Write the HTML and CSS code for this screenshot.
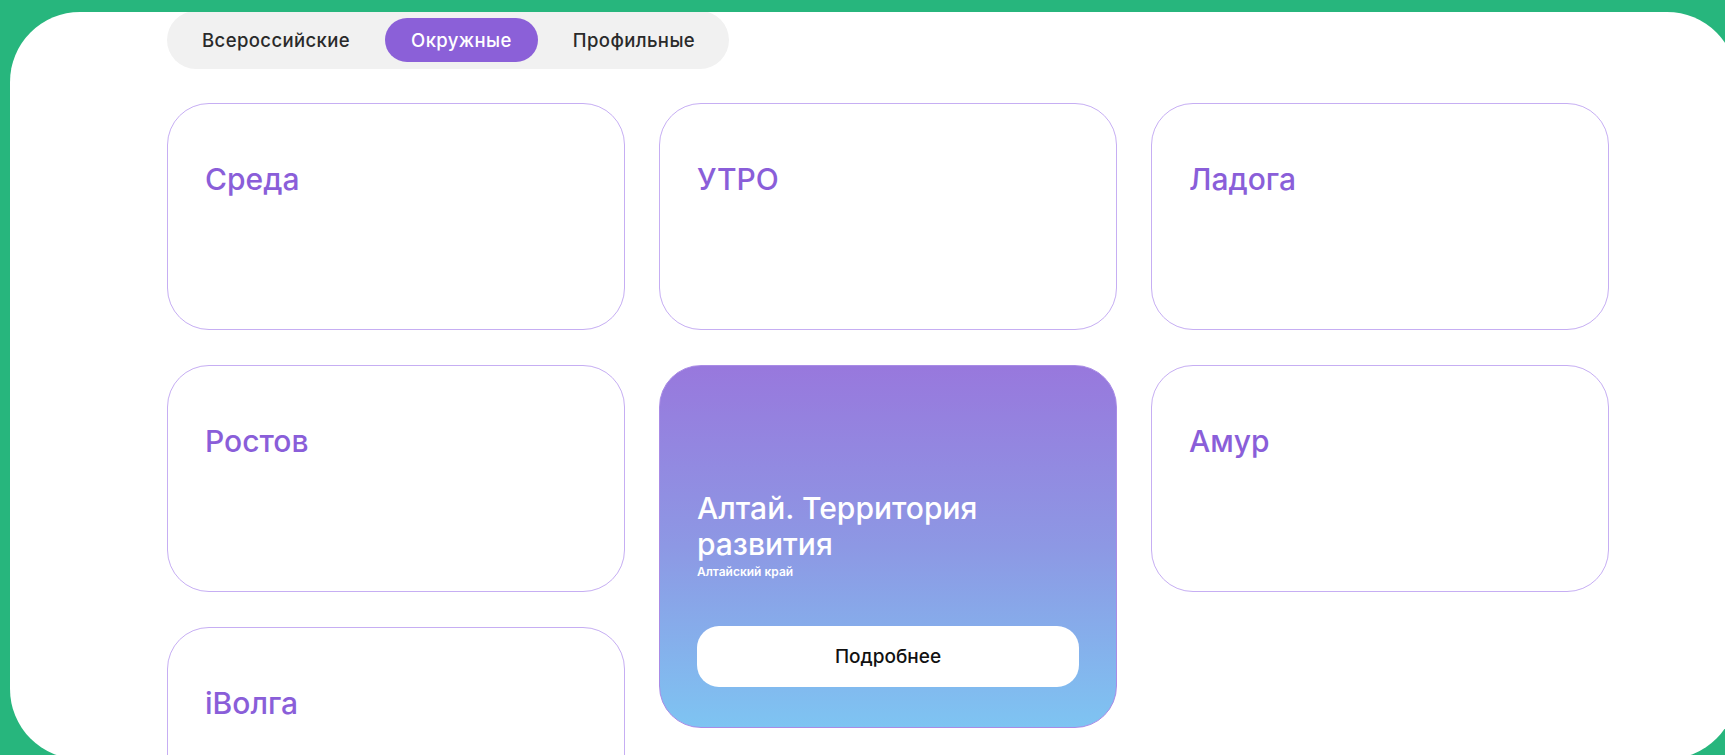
FILE: index.html
```html
<!DOCTYPE html>
<html lang="ru">
<head>
<meta charset="utf-8">
<title>Форумы</title>
<link rel="stylesheet" href="styles.css">
</head>
<body>
<main class="panel">
  <nav class="tabs">
    <button class="tab">Всероссийские</button>
    <button class="tab tab--active">Окружные</button>
    <button class="tab">Профильные</button>
  </nav>

  <section class="forums">
    <div class="forums__col">
      <article class="card"><h3 class="card__title">Среда</h3></article>
      <article class="card"><h3 class="card__title">Ростов</h3></article>
      <article class="card"><h3 class="card__title">iВолга</h3></article>
    </div>
    <div class="forums__col">
      <article class="card"><h3 class="card__title">УТРО</h3></article>
      <article class="card card--open">
        <h3 class="card__title">Алтай. Территория развития</h3>
        <p class="card__region">Алтайский край</p>
        <a class="card__more" href="#">Подробнее</a>
      </article>
    </div>
    <div class="forums__col">
      <article class="card"><h3 class="card__title">Ладога</h3></article>
      <article class="card"><h3 class="card__title">Амур</h3></article>
    </div>
  </section>
</main>
</body>
</html>
```

FILE: styles.css
```css
* {
  box-sizing: border-box;
}

html,
body {
  height: 100%;
}

body {
  margin: 0;
  overflow: hidden;
  background: #27b67d;
  font-family: Inter, "Noto Sans", sans-serif;
}

/* white sheet with large rounded corners */
.panel {
  height: 747px;
  margin: 12px -12px 0 10px;
  padding-left: 157px;
  background: #ffffff;
  border-radius: 70px;
  overflow: hidden;
}

/* segmented tab switcher */
.tabs {
  display: inline-flex;
  gap: 9px;
  margin-top: -1px;
  padding: 7px 8px 7px 9px;
  background: #f1f1f1;
  border-radius: 30px;
}

.tab {
  height: 44px;
  padding: 0 26px;
  border: 0;
  border-radius: 22px;
  background: transparent;
  color: #2a2a2a;
  font-family: inherit;
  font-size: 18.5px;
  font-weight: 500;
  letter-spacing: 0.4px;
  cursor: pointer;
}

.tab--active {
  background: #8b60d8;
  color: #ffffff;
}

/* forum cards, three columns */
.forums {
  display: flex;
  gap: 34px;
  margin-top: 34px;
}

.forums__col {
  display: flex;
  flex-direction: column;
  gap: 35px;
  width: 458px;
}

.card {
  display: flex;
  flex-direction: column;
  height: 227px;
  padding: 57px 37px 0;
  border: 1.5px solid #c6aef3;
  border-radius: 42px;
  background: #ffffff;
}

.card__title {
  margin: 0;
  color: #8a5ed9;
  font-size: 30px;
  font-weight: 500;
  line-height: 36px;
}

.card--open {
  height: 363px;
  justify-content: flex-end;
  padding: 0 37px 40px;
  border-color: #a98be6;
  background: linear-gradient(180deg, #9878dd 0%, #8d98e4 50%, #7ec4f2 100%);
}

.card--open .card__title {
  color: #ffffff;
  max-width: 300px;
}

.card__region {
  margin: 2px 0 0;
  color: #ffffff;
  font-size: 12px;
  font-weight: 600;
  line-height: 16px;
}

.card__more {
  display: flex;
  align-items: center;
  justify-content: center;
  height: 61px;
  margin-top: 46px;
  border-radius: 22px;
  background: #ffffff;
  color: #111111;
  font-size: 19px;
  font-weight: 500;
  text-decoration: none;
}
```
